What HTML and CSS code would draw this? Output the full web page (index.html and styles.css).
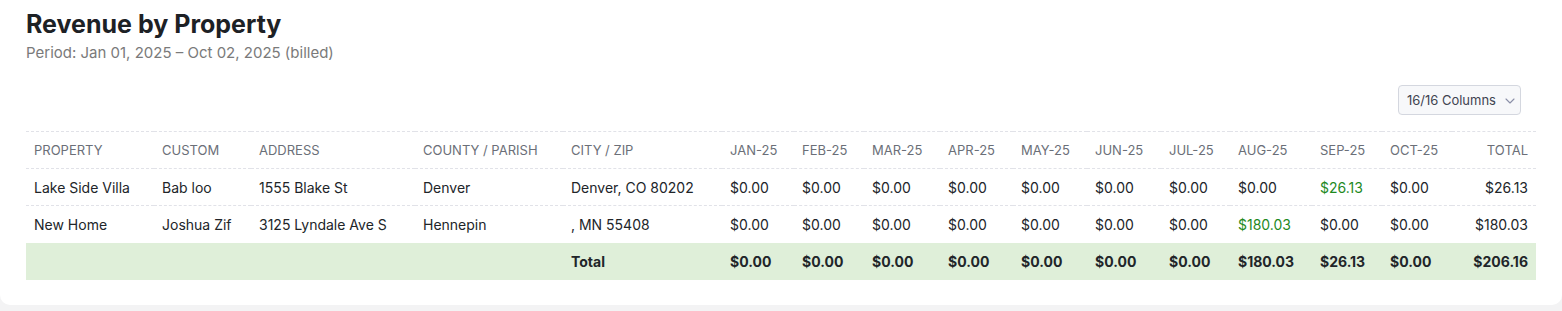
FILE: index.html
```html
<!DOCTYPE html>
<html lang="en">
<head>
<meta charset="utf-8">
<title>Revenue by Property</title>
<link rel="stylesheet" href="styles.css">
</head>
<body>
<div class="card">
  <h1 class="title">Revenue by Property</h1>
  <div class="subtitle">Period: Jan 01, 2025 – Oct 02, 2025 (billed)</div>
  <div class="toolbar">
    <button class="cols-btn"><span>16/16 Columns</span>
      <svg class="chev" width="10" height="6" viewBox="0 0 10 6"><path d="M1 1l4 4 4-4" fill="none" stroke="currentColor" stroke-width="1.1" stroke-linecap="round" stroke-linejoin="round"/></svg>
    </button>
  </div>
  <table class="report">
    <colgroup>
      <col class="c-prop"><col class="c-cust"><col class="c-addr"><col class="c-county"><col class="c-city">
      <col class="c-jan"><col class="c-feb"><col class="c-mar"><col class="c-apr"><col class="c-may">
      <col class="c-jun"><col class="c-jul"><col class="c-aug"><col class="c-sep"><col class="c-oct"><col class="c-total">
    </colgroup>
    <thead>
      <tr>
        <th>Property</th><th>Custom</th><th>Address</th><th>County / Parish</th><th>City / Zip</th>
        <th>Jan-25</th><th>Feb-25</th><th>Mar-25</th><th>Apr-25</th><th>May-25</th><th>Jun-25</th>
        <th>Jul-25</th><th>Aug-25</th><th>Sep-25</th><th>Oct-25</th><th class="num">Total</th>
      </tr>
    </thead>
    <tbody>
      <tr>
        <td>Lake Side Villa</td><td>Bab loo</td><td>1555 Blake St</td><td>Denver</td><td>Denver, CO 80202</td>
        <td>$0.00</td><td>$0.00</td><td>$0.00</td><td>$0.00</td><td>$0.00</td><td>$0.00</td>
        <td>$0.00</td><td>$0.00</td><td class="pos">$26.13</td><td>$0.00</td><td class="num">$26.13</td>
      </tr>
      <tr>
        <td>New Home</td><td>Joshua Zif</td><td>3125 Lyndale Ave S</td><td>Hennepin</td><td>, MN 55408</td>
        <td>$0.00</td><td>$0.00</td><td>$0.00</td><td>$0.00</td><td>$0.00</td><td>$0.00</td>
        <td>$0.00</td><td class="pos">$180.03</td><td>$0.00</td><td>$0.00</td><td class="num">$180.03</td>
      </tr>
    </tbody>
    <tfoot>
      <tr>
        <td></td><td></td><td></td><td></td><td>Total</td>
        <td>$0.00</td><td>$0.00</td><td>$0.00</td><td>$0.00</td><td>$0.00</td><td>$0.00</td>
        <td>$0.00</td><td>$180.03</td><td>$26.13</td><td>$0.00</td><td class="num">$206.16</td>
      </tr>
    </tfoot>
  </table>
</div>
</body>
</html>
```

FILE: styles.css
```css
html, body {
  margin: 0;
  padding: 0;
  background: #f3f3f4;
  font-family: Inter, "Noto Sans", sans-serif;
  color: #212529;
}

.card {
  background: #fff;
  border-radius: 0 0 10px 10px;
  padding: 8px 26px 25px 26px;
  margin-bottom: 7px;
  width: 1510px;
  min-height: 271px;
}

.title {
  margin: 0;
  font-size: 25px;
  line-height: 32px;
  font-weight: 700;
  color: #1d2125;
}

.subtitle {
  margin-top: 3px;
  font-size: 15px;
  line-height: 19px;
  color: #7a7a7a;
}

.toolbar {
  display: flex;
  justify-content: flex-end;
  padding-right: 15px;
  margin-top: 23px;
  margin-bottom: 16px;
}

.cols-btn {
  display: flex;
  align-items: center;
  gap: 9px;
  height: 30px;
  padding: 0 5px 0 8px;
  border: 1px solid #d4d7df;
  border-radius: 4px;
  background: #f7f8fa;
  font-family: Inter, "Noto Sans", sans-serif;
  font-size: 13px;
  color: #3f4350;
  white-space: nowrap;
}

.chev {
  color: #8b8fa8;
  margin-top: 1px;
}

.report {
  width: 1510px;
  table-layout: fixed;
  border-collapse: collapse;
  font-size: 14px;
}

.c-prop { width: 128px; }
.c-cust { width: 97px; }
.c-addr { width: 164px; }
.c-county { width: 148px; }
.c-city { width: 159px; }
.c-jan { width: 72px; }
.c-feb { width: 70px; }
.c-mar { width: 76px; }
.c-apr { width: 73px; }
.c-may { width: 74px; }
.c-jun { width: 74px; }
.c-jul { width: 69px; }
.c-aug { width: 82px; }
.c-sep { width: 70px; }
.c-oct { width: 70px; }
.c-total { width: 84px; }

.report th,
.report td {
  height: 36px;
  padding: 0 8px;
  text-align: left;
  white-space: nowrap;
  vertical-align: middle;
}

.report thead th {
  font-size: 13px;
  font-weight: 400;
  text-transform: uppercase;
  color: #6b6f78;
  border-top: 1px dashed #e1e2e8;
  border-bottom: 1px dashed #e1e2e8;
}

.report tbody td {
  color: #212529;
  border-bottom: 1px dashed #e1e2e8;
}

.report tbody tr:last-child td {
  border-bottom: 1px solid transparent;
}

.report .num {
  text-align: right;
}

.report .pos {
  color: #1f8a1f;
}

.report tfoot td {
  height: 37px;
  background: #dfefd9;
  font-weight: 700;
  color: #212529;
}
```
